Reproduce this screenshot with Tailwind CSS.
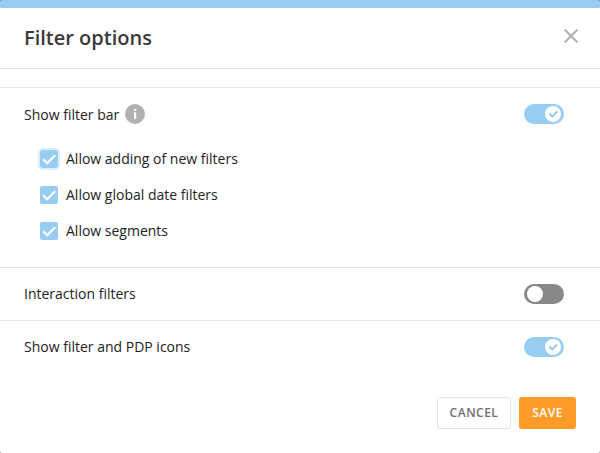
<!DOCTYPE html>
<html lang="en">
<head>
<meta charset="utf-8">
<title>Filter options</title>
<script src="https://cdn.jsdelivr.net/npm/@tailwindcss/browser@4"></script>
</head>
<body class="bg-[#7a8085] font-['Open_Sans','Noto_Sans',sans-serif] text-sm text-[#222]">
<main class="flex h-[453px] w-[600px] flex-col overflow-hidden rounded-[2px] border-t-8 border-[#98ccf0] bg-white">
  <header class="flex h-[61px] items-center justify-between border-b border-[#e3e3e3] px-6">
    <h1 class="text-xl leading-7 font-semibold text-[#3a3a3a]">Filter options</h1>
    <button class="mt-[-4px] mr-[-2px]" aria-label="Close">
      <svg class="block size-[14px]" viewBox="0 0 14 14" fill="none" stroke="#b0b0b0" stroke-width="2"><path d="M.6.6 13.4 13.4M13.4.6.6 13.4"/></svg>
    </button>
  </header>
  <div class="h-[19px] border-b border-[#e3e3e3]"></div>
  <section class="h-[180px] border-b border-[#e3e3e3] px-6 pt-4">
    <div class="flex h-5 items-center justify-between pr-3">
      <div class="flex items-center gap-1.5">
        <span class="pt-[2px]">Show filter bar</span>
        <svg class="block size-5" viewBox="0 0 20 20"><circle cx="10" cy="10" r="10" fill="#b1b1b1"/><path d="M9 5h2.2v2H9zM9 8.2h2.2V15H9z" fill="#fff"/></svg>
      </div>
      <div class="flex h-5 w-10 items-center justify-end rounded-full bg-[#98ccf0] pr-[3px]">
        <svg class="block size-4" viewBox="0 0 16 16"><circle cx="8" cy="8" r="8" fill="#fff"/><path d="m4.3 7.5 3 3 4.8-5" fill="none" stroke="#98ccf0" stroke-width="2.1"/></svg>
      </div>
    </div>
    <div class="flex flex-col gap-[18px] pt-[26px] pl-4">
      <label class="flex h-[18px] items-center gap-2">
        <svg class="block size-[18px] rounded-[3px] bg-[#98ccf0] ring-2 ring-[#dceefa]" viewBox="0 0 18 18" fill="none" stroke="#fff" stroke-width="2.2"><path d="m3.2 9.3 3.9 3.9 8-8"/></svg>
        <span>Allow adding of new filters</span>
      </label>
      <label class="flex h-[18px] items-center gap-2">
        <svg class="block size-[18px] rounded-[2px] bg-[#98ccf0]" viewBox="0 0 18 18" fill="none" stroke="#fff" stroke-width="2.2"><path d="m3.2 9.3 3.9 3.9 8-8"/></svg>
        <span>Allow global date filters</span>
      </label>
      <label class="flex h-[18px] items-center gap-2">
        <svg class="block size-[18px] rounded-[2px] bg-[#98ccf0]" viewBox="0 0 18 18" fill="none" stroke="#fff" stroke-width="2.2"><path d="m3.2 9.3 3.9 3.9 8-8"/></svg>
        <span>Allow segments</span>
      </label>
    </div>
  </section>
  <section class="flex h-[53px] items-center justify-between border-b border-[#e3e3e3] pr-9 pl-6">
    <span>Interaction filters</span>
    <div class="flex h-5 w-10 items-center rounded-full bg-[#888] pl-[3px]">
      <div class="size-4 rounded-full bg-white"></div>
    </div>
  </section>
  <section class="flex h-[52px] items-center justify-between pr-9 pl-6">
    <span>Show filter and PDP icons</span>
    <div class="flex h-5 w-10 items-center justify-end rounded-full bg-[#98ccf0] pr-[3px]">
      <svg class="block size-4" viewBox="0 0 16 16"><circle cx="8" cy="8" r="8" fill="#fff"/><path d="m4.3 7.5 3 3 4.8-5" fill="none" stroke="#98ccf0" stroke-width="2.1"/></svg>
    </div>
  </section>
  <footer class="flex justify-end gap-2 px-6 pt-6 text-xs font-semibold tracking-[0.5px]">
    <button class="h-8 w-[74px] rounded-[3px] border border-[#e3e3e3] text-[#707070]">CANCEL</button>
    <button class="h-8 w-[57px] rounded-[3px] bg-[#ff9b28] text-white">SAVE</button>
  </footer>
</main>
</body>
</html>
